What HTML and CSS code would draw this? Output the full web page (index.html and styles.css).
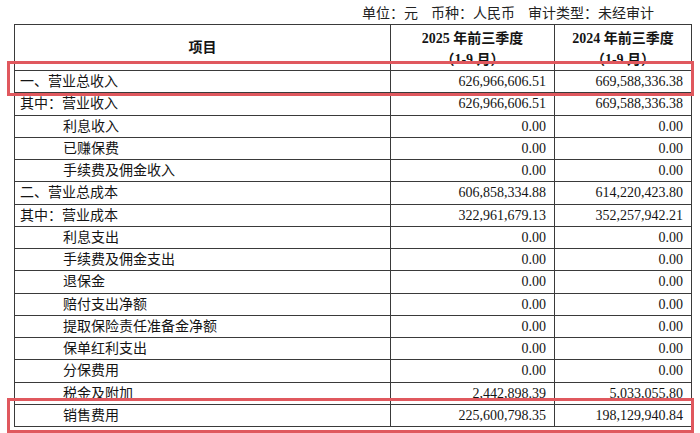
FILE: index.html
```html
<!DOCTYPE html>
<html lang="zh-CN">
<head>
<meta charset="utf-8">
<title>利润表</title>
<link rel="stylesheet" href="styles.css">
</head>
<body>
<div class="page">
  <div class="caption">
    <span class="cap-item">单位：元</span>
    <span class="cap-item">币种：人民币</span>
    <span class="cap-item">审计类型：未经审计</span>
  </div>
  <table class="report">
    <colgroup>
      <col class="c-name">
      <col class="c-v1">
      <col class="c-v2">
    </colgroup>
    <thead>
      <tr class="head">
        <th>项目</th>
        <th>2025 年前三季度<br>（1-9 月）</th>
        <th>2024 年前三季度<br>（1-9 月）</th>
      </tr>
    </thead>
    <tbody>
      <tr><td>一、营业总收入</td><td class="num">626,966,606.51</td><td class="num">669,588,336.38</td></tr>
      <tr><td>其中：营业收入</td><td class="num">626,966,606.51</td><td class="num">669,588,336.38</td></tr>
      <tr><td class="sub">利息收入</td><td class="num">0.00</td><td class="num">0.00</td></tr>
      <tr><td class="sub">已赚保费</td><td class="num">0.00</td><td class="num">0.00</td></tr>
      <tr><td class="sub">手续费及佣金收入</td><td class="num">0.00</td><td class="num">0.00</td></tr>
      <tr><td>二、营业总成本</td><td class="num">606,858,334.88</td><td class="num">614,220,423.80</td></tr>
      <tr><td>其中：营业成本</td><td class="num">322,961,679.13</td><td class="num">352,257,942.21</td></tr>
      <tr><td class="sub">利息支出</td><td class="num">0.00</td><td class="num">0.00</td></tr>
      <tr><td class="sub">手续费及佣金支出</td><td class="num">0.00</td><td class="num">0.00</td></tr>
      <tr><td class="sub">退保金</td><td class="num">0.00</td><td class="num">0.00</td></tr>
      <tr><td class="sub">赔付支出净额</td><td class="num">0.00</td><td class="num">0.00</td></tr>
      <tr><td class="sub">提取保险责任准备金净额</td><td class="num">0.00</td><td class="num">0.00</td></tr>
      <tr><td class="sub">保单红利支出</td><td class="num">0.00</td><td class="num">0.00</td></tr>
      <tr><td class="sub">分保费用</td><td class="num">0.00</td><td class="num">0.00</td></tr>
      <tr><td class="sub">税金及附加</td><td class="num">2,442,898.39</td><td class="num">5,033,055.80</td></tr>
      <tr><td class="sub">销售费用</td><td class="num">225,600,798.35</td><td class="num">198,129,940.84</td></tr>
    </tbody>
  </table>
  <div class="mark mark-top"></div>
  <div class="mark mark-bottom"></div>
</div>
</body>
</html>
```
FILE: styles.css
```css
html, body {
  margin: 0;
  padding: 0;
  background: #ffffff;
}

body {
  font-family: "Liberation Serif", "Noto Sans CJK SC", serif;
  color: #141414;
  font-size: 14px;
}

.page {
  position: relative;
  width: 700px;
  height: 433px;
  overflow: hidden;
}

.caption {
  display: flex;
  justify-content: flex-end;
  gap: 13px;
  height: 24px;
  box-sizing: border-box;
  padding: 4px 46px 0 0;
  line-height: 20px;
  font-size: 14px;
  color: #222;
}

.report {
  margin-left: 14px;
  width: 677px;
  border-collapse: collapse;
  table-layout: fixed;
}

.c-name { width: 376px; }
.c-v1 { width: 164px; }
.c-v2 { width: 137px; }

.report th,
.report td {
  border: 1px solid #3a3a3a;
  padding: 0;
  white-space: nowrap;
  overflow: hidden;
}

.report th {
  height: 43px;
  line-height: 21px;
  padding-top: 3px;
  box-sizing: border-box;
  font-weight: bold;
  text-align: center;
  vertical-align: top;
}

.report th:first-child {
  vertical-align: middle;
  padding-top: 0;
}

.report td {
  line-height: 21.25px;
  padding-left: 5px;
  vertical-align: middle;
}

.report td.sub {
  padding-left: 48px;
}

.report td.num {
  text-align: right;
  padding: 0 8px 0 0;
}

.mark {
  position: absolute;
  left: 7px;
  width: 687px;
  border: 3px solid #e0585e;
  box-sizing: border-box;
  pointer-events: none;
}

.mark-top {
  top: 61px;
  height: 35px;
}

.mark-bottom {
  top: 398px;
  height: 35px;
}
```
